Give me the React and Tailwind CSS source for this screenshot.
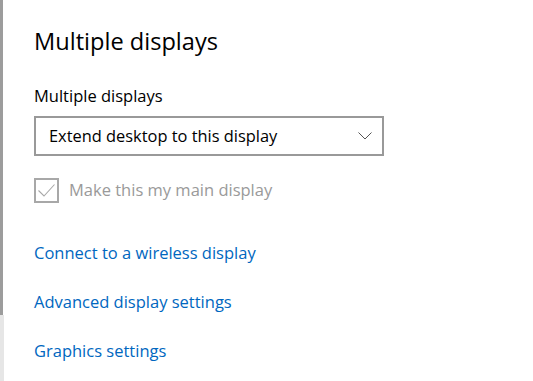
import React from 'react';

const font = { fontFamily: '"Open Sans", "Noto Sans", sans-serif' };

const links = ['Connect to a wireless display', 'Advanced display settings', 'Graphics settings'];

export default function App() {
  return (
    <div className="flex h-[381px] w-[533px] overflow-hidden bg-white" style={font}>
      <div className="flex w-[4px] flex-col">
        <div className="h-[315px] w-[3px] bg-[#9c9c9c]" />
        <div className="flex-1 bg-[#e6e6e6]" />
      </div>
      <div className="flex flex-col pl-[30px] pt-[24px]">
        <h2 className="h-[34px] text-[23.6px] leading-[34px] text-black">Multiple displays</h2>
        <p className="mt-[26px] h-[24px] text-[16.5px] leading-[24px] text-black">Multiple displays</p>
        <div className="mt-[8px] flex h-[40px] w-[350px] items-center justify-between border-2 border-[#999999] pl-[13px] pr-[10px]">
          <span className="text-[16.4px] text-black">Extend desktop to this display</span>
          <svg width="14" height="8" viewBox="0 0 14 8" fill="none">
            <path d="M0.5 0.5 L7 7 L13.5 0.5" stroke="#555" strokeWidth="1" />
          </svg>
        </div>
        <div className="mt-[22px] flex items-center gap-[10px]">
          <div className="flex h-[25px] w-[25px] items-center justify-center border-2 border-[#a8a8a8]">
            <svg width="17" height="13" viewBox="0 0 17 13" fill="none">
              <path d="M0.5 6.5 L6 12 L16.5 0.5" stroke="#a8a8a8" strokeWidth="1.1" />
            </svg>
          </div>
          <span className="text-[16.5px] text-[#9a9a9a]">Make this my main display</span>
        </div>
        <div className="mt-[38px] flex flex-col gap-[25px]">
          {links.map(l => (
            <a key={l} className="h-[24px] text-[16.5px] leading-[24px] text-[#0067c0]">{l}</a>
          ))}
        </div>
      </div>
    </div>
  );
}
